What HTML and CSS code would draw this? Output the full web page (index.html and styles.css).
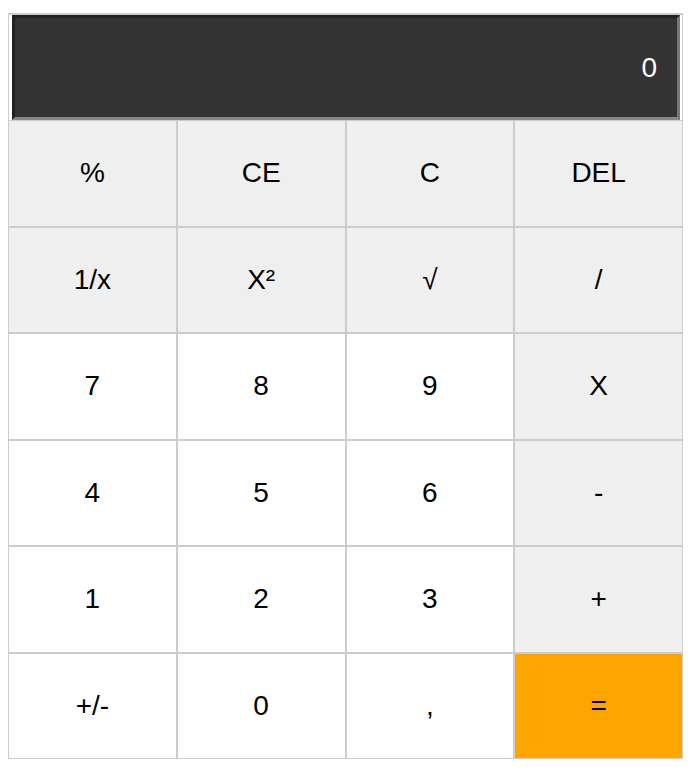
FILE: index.html
```html
<!DOCTYPE html>
<html>
<head>
<meta charset="utf-8">
<link rel="stylesheet" href="styles.css">
</head>
<body>
<div class="calc">
  <div class="screen">
    <div class="display">0</div>
  </div>
  <div class="keys">
    <button class="key fn">%</button>
    <button class="key fn">CE</button>
    <button class="key fn">C</button>
    <button class="key fn">DEL</button>
    <button class="key fn">1/x</button>
    <button class="key fn">X²</button>
    <button class="key fn">√</button>
    <button class="key fn">/</button>
    <button class="key">7</button>
    <button class="key">8</button>
    <button class="key">9</button>
    <button class="key fn">X</button>
    <button class="key">4</button>
    <button class="key">5</button>
    <button class="key">6</button>
    <button class="key fn">-</button>
    <button class="key">1</button>
    <button class="key">2</button>
    <button class="key">3</button>
    <button class="key fn">+</button>
    <button class="key">+/-</button>
    <button class="key">0</button>
    <button class="key">,</button>
    <button class="key eq">=</button>
  </div>
</div>
</body>
</html>
```
FILE: styles.css
```css
html, body {
  margin: 0;
  padding: 0;
  background: #fff;
}
body {
  padding: 13px 8px 0 8px;
  font-family: "Liberation Sans", Arial, sans-serif;
}
.calc {
  width: 675px;
}
.screen {
  border: 1px solid #ccc;
  border-top-width: 2px;
  border-bottom: none;
  padding: 0 2px 0 3px;
}
.display {
  box-sizing: border-box;
  height: 105px;
  background: #333;
  color: #fff;
  border-style: solid;
  border-width: 3px;
  border-color: #222 #777 #888 #222;
  font-size: 28px;
  display: flex;
  align-items: center;
  justify-content: flex-end;
  padding-right: 20px;
}
.keys {
  display: grid;
  grid-template-columns: repeat(4, 1fr);
  grid-auto-rows: 106.5px;
}
.key {
  box-sizing: border-box;
  margin: 0;
  border: 1px solid #ccc;
  background: #fff;
  color: #000;
  font-family: "Liberation Sans", Arial, sans-serif;
  font-size: 28px;
  padding: 0;
}
.key.fn {
  background: #efefef;
}
.key.eq {
  background: #ffa500;
}
```
